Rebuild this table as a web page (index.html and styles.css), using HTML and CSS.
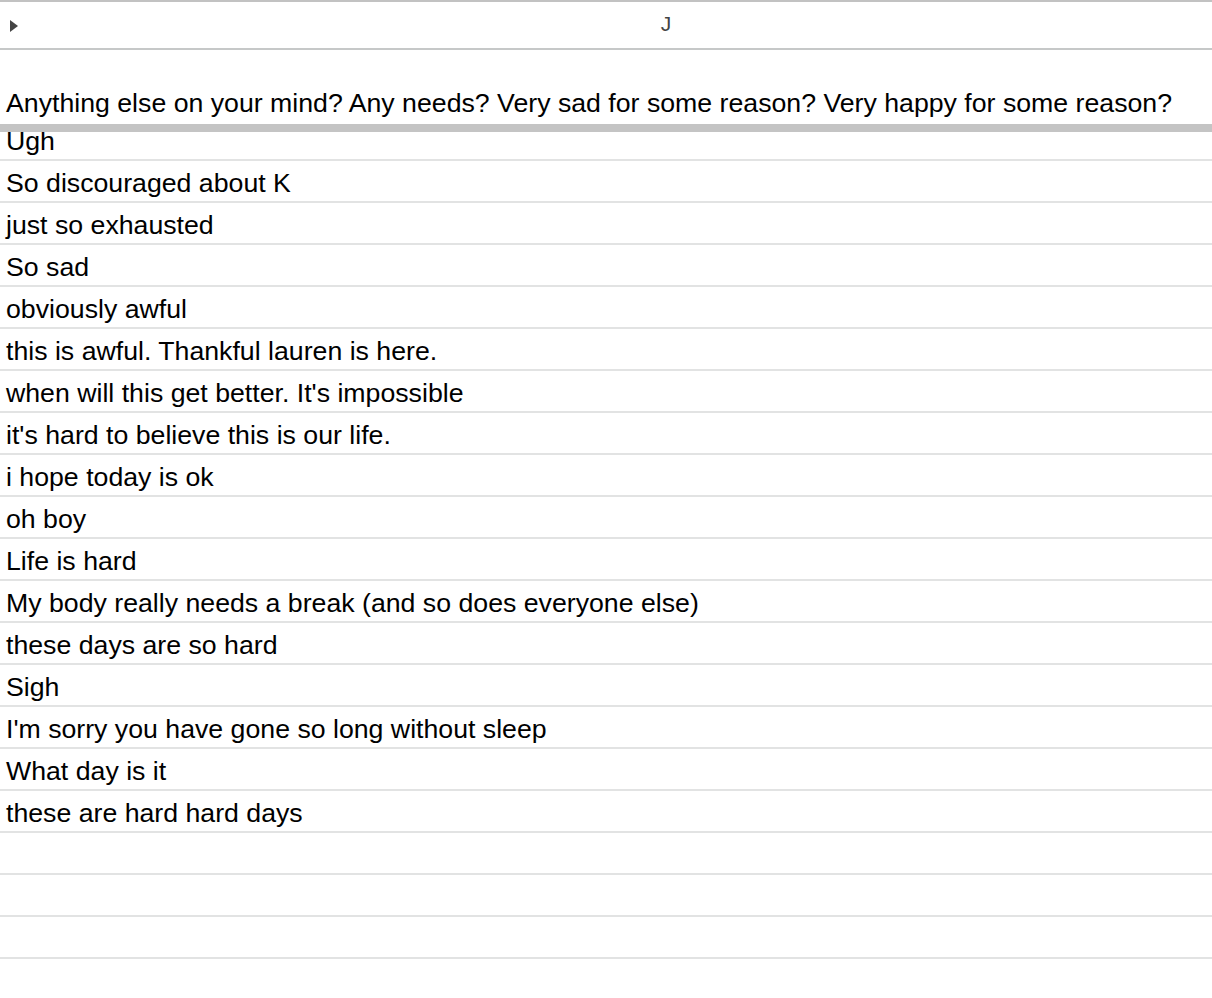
FILE: index.html
```html
<!DOCTYPE html>
<html>
<head>
<meta charset="utf-8">
<link rel="stylesheet" href="styles.css">
</head>
<body>
<div class="sheet">
  <div class="col-header">
    <svg class="toggle" width="8" height="12" viewBox="0 0 8 12"><path d="M0 0 L8 6 L0 12 Z" fill="#444"/></svg>
    <div class="col-label">J</div>
  </div>
  <div class="question">Anything else on your mind? Any needs? Very sad for some reason? Very happy for some reason?</div>
  <div class="freeze"></div>
  <div class="row first"><span>Ugh</span></div>
  <div class="row"><span>So discouraged about K</span></div>
  <div class="row"><span>just so exhausted</span></div>
  <div class="row"><span>So sad</span></div>
  <div class="row"><span>obviously awful</span></div>
  <div class="row"><span>this is awful. Thankful lauren is here.</span></div>
  <div class="row"><span>when will this get better. It's impossible</span></div>
  <div class="row"><span>it's hard to believe this is our life.</span></div>
  <div class="row"><span>i hope today is ok</span></div>
  <div class="row"><span>oh boy</span></div>
  <div class="row"><span>Life is hard</span></div>
  <div class="row"><span>My body really needs a break (and so does everyone else)</span></div>
  <div class="row"><span>these days are so hard</span></div>
  <div class="row"><span>Sigh</span></div>
  <div class="row"><span>I'm sorry you have gone so long without sleep</span></div>
  <div class="row"><span>What day is it</span></div>
  <div class="row"><span>these are hard hard days</span></div>
  <div class="row"><span></span></div>
  <div class="row"><span></span></div>
  <div class="row"><span></span></div>
  <div class="row"><span></span></div>
</div>
</body>
</html>
```
FILE: styles.css
```css
html, body {
  margin: 0;
  padding: 0;
  background: #ffffff;
  overflow: hidden;
}
body {
  font-family: "Liberation Sans", Arial, sans-serif;
  color: #000;
}
.sheet {
  width: 1212px;
  overflow: hidden;
}
.col-header {
  position: relative;
  height: 46px;
  border-top: 2px solid #c2c2c2;
  border-bottom: 2px solid #c6c8c8;
  width: 1332px;
  display: flex;
  align-items: center;
  justify-content: center;
}
.toggle {
  position: absolute;
  left: 10px;
  top: 18px;
}
.col-label {
  font-size: 21px;
  color: #444;
  line-height: 24px;
  margin-top: -2px;
}
.question {
  height: 74px;
  box-sizing: border-box;
  display: flex;
  align-items: flex-end;
  padding: 0 0 6px 6px;
  font-size: 26.7px;
  line-height: 30px;
  white-space: nowrap;
}
.freeze {
  height: 8px;
  background: #c4c4c4;
}
.row {
  height: 42px;
  box-sizing: border-box;
  border-bottom: 2px solid #e2e3e3;
  display: flex;
  align-items: flex-end;
  padding: 0 0 3px 6px;
  font-size: 26.7px;
  line-height: 30px;
  white-space: nowrap;
  overflow: hidden;
}
.row.first {
  height: 29px;
  padding-bottom: 3px;
}
```
